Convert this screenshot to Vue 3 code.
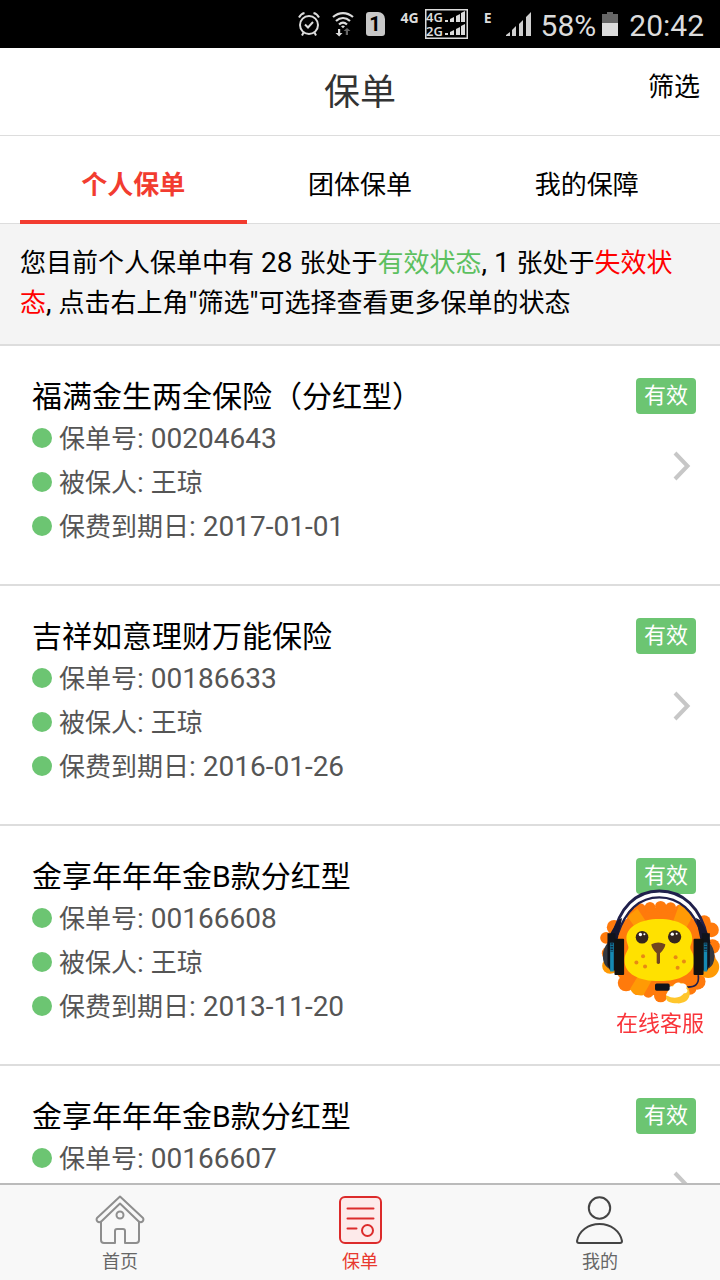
<template>
  <div class="app">
    <div class="status-bar">
      <svg class="status-icon" width="22" height="26" viewBox="0 0 22 26" fill="none" stroke="#dcdcdc" stroke-width="2" aria-hidden="true">
        <circle cx="11" cy="14" r="9" />
        <path d="M7 13.500l3 3 5-5.500M1 6.500c1-2 3-4 5.500-4.500M21 6.500c-1-2-3-4-5.500-4.500M5.500 21.500L4 24.500M16.500 21.500L18 24.500" />
      </svg>
      <svg class="status-icon" width="22" height="26" viewBox="0 0 22 26" fill="none" stroke="#dcdcdc" stroke-width="2.200" aria-hidden="true">
        <path d="M1 6c6-5.300 14-5.300 20 0M4 10c4.200-4 9.800-4 14 0M7 13.500c2.500-2.300 5.500-2.300 8 0" />
        <path d="M9 15.300q2-1.500 4 0l-2 2z" fill="#dcdcdc" stroke="none" />
        <path d="M6 18v4H3.500L7.200 25.500 10.500 22H8.200v-4z" fill="#dcdcdc" stroke="none" />
        <path d="M13.800 24v-4h-2.300L15 17l3.500 3H16v4z" fill="#666" stroke="none" />
      </svg>
      <span class="sim">1</span>
      <span class="net net-4g">4G</span>
      <svg class="dual" width="43" height="30" viewBox="0 0 43 30" aria-hidden="true">
        <rect x=".75" y=".75" width="41.500" height="28.500" fill="none" stroke="#dcdcdc" stroke-width="1.500" />
        <g fill="#dcdcdc">
          <text x="1" y="13">4G</text>
          <text x="1" y="27">2G</text>
          <path d="M20 11h3v2h-3zM25 10l4-2v5h-4zM31 7l4-2v8h-4zM36 4l4-2v11h-4z" />
          <path d="M20 24h3v2h-3zM25 23l4-2v5h-4zM31 20l4-2v8h-4zM36 17l4-2v11h-4z" />
        </g>
      </svg>
      <span class="net net-e">E</span>
      <svg class="signal" width="25" height="24" viewBox="0 0 25 24" fill="#d0d0d0" aria-hidden="true">
        <path d="M0 24v-1l4-3v4zM6 24v-6l4-4v10zM13 24V12l4-4v16zM20 24V5l5-5v24z" />
      </svg>
      <span class="percent">58%</span>
      <svg class="battery" width="16" height="24" viewBox="0 0 16 24" aria-hidden="true">
        <path d="M0 2h5V0h6v2h5v10H0z" fill="#666" />
        <path d="M0 11h16v13H0z" fill="#dcdcdc" />
      </svg>
      <span class="clock">20:42</span>
    </div>

    <header class="header">
      <h1 class="header-title">保单</h1>
      <button type="button" class="filter">筛选</button>
    </header>

    <nav class="tabs">
      <button
        v-for="(tab, i) in tabs"
        :key="tab"
        type="button"
        :class="['tab', { active: activeTab === i }]"
        @click="activeTab = i"
      >{{ tab }}</button>
    </nav>

    <p class="notice">您目前个人保单中有<span class="latin"> 28 </span>张处于<span class="valid">有效状态</span><span class="latin">, 1 </span>张处于<span class="invalid">失效状态</span><span class="latin">, </span>点击右上角<span class="latin">"</span>筛选<span class="latin">"</span>可选择查看更多保单的状态</p>

    <main class="policy-list">
      <article v-for="policy in policies" :key="policy.no" class="policy">
        <div class="policy-info">
          <h2 class="policy-name">{{ policy.name }}</h2>
          <ul class="policy-rows">
            <li>保单号<span class="latin">: {{ policy.no }}</span></li>
            <li>被保人<span class="latin">: </span>{{ policy.insured }}</li>
            <li>保费到期日<span class="latin">: {{ policy.due }}</span></li>
          </ul>
        </div>
        <div class="policy-side">
          <span class="badge">有效</span>
          <svg class="chevron" width="18" height="30" viewBox="0 0 18 30" fill="none" stroke="#c7c7c7" stroke-width="4" aria-hidden="true">
            <path d="M2 2l12.500 13L2 28" />
          </svg>
        </div>
      </article>
    </main>

    <a href="#service" class="service">
      <svg class="lion" width="120" height="117" viewBox="30 114 360 352" aria-hidden="true">
        <g fill="#ff7a0c">
          <ellipse cx="209" cy="305" rx="150" ry="132" />
          <circle v-for="(b, i) in maneBumps" :key="i" :cx="b[0]" :cy="b[1]" :r="b[2]" />
        </g>
        <g fill="#ff9a05">
          <path d="M112 200l30-24 60 90-30 20zM268 164l44 28-50 90-30-20zM120 418l30-50 40 15-30 54q-30 3-40-19z" />
          <circle cx="355" cy="352" r="33" />
          <circle cx="60" cy="348" r="24" />
        </g>
        <path d="M208 207c58 0 99 24 99 58 0 14-6 20-6 28 0 9 12 18 12 38 0 41-43 63-105 63s-105-22-105-63c0-20 12-29 12-38 0-8-6-14-6-28 0-34 41-58 99-58z" fill="#ffe100" />
        <g fill="#35251e">
          <circle cx="156" cy="262" r="19" />
          <circle cx="254" cy="261" r="20" />
        </g>
        <g fill="#fff">
          <circle cx="151" cy="254" r="5" />
          <circle cx="163" cy="253" r="3" />
          <circle cx="247" cy="253" r="5" />
          <circle cx="260" cy="252" r="3" />
        </g>
        <path d="M184 283q21-10 42 0 0 12-16 27v30q-5 6-10 0v-30q-16-15-16-27z" fill="#714520" />
        <g fill="#e88a13">
          <circle cx="159" cy="319" r="6" />
          <circle cx="139" cy="338" r="6" />
          <circle cx="165" cy="350" r="6" />
          <circle cx="257" cy="322" r="6" />
          <circle cx="282" cy="335" r="6" />
          <circle cx="263" cy="354" r="6" />
        </g>
        <path d="M76 256C96 178 142 132 208 132s112 46 134 124" fill="none" stroke="#fff" stroke-width="12" />
        <path d="M68 265C86 172 138 123 208 123s126 49 144 142" fill="none" stroke="#20204c" stroke-width="9" />
        <path d="M82 254C106 184 148 142 208 142s104 42 128 112" fill="none" stroke="#20204c" stroke-width="7" />
        <path d="M52 280l8-28 24-42 12-6-16 76zM362 280l-8-28-24-42-12-6 16 76z" fill="#17172f" />
        <path d="M56 276q-18 18-18 43t18 38zM356 276q18 18 18 43t-18 38z" fill="#343840" />
        <path d="M52 250h24v112H60l-8-16zM336 250h24v96l-8 16h-16z" fill="#10131b" />
        <path d="M60 279h11v86H60zM341 279h11v86h-11z" fill="#168ab2" />
        <path d="M65 280v26M347 280v26" stroke="#0e2940" stroke-width="8" stroke-dasharray="5 3" />
        <rect x="73" y="267" width="29" height="109" rx="3" fill="#12110f" />
        <rect x="311" y="267" width="30" height="109" rx="3" fill="#12110f" />
        <path d="M325 376c4 28-10 36-32 36h-54" fill="none" stroke="#20204c" stroke-width="5" />
        <path d="M228 444c0-20 18-44 40-45 20-1 34 20 31 38-4 20-22 25-38 24-18 0-33-6-33-17z" fill="#ffc62c" />
        <path d="M228 437c2-8 8-10 7-20 2-8 9-8 14-7 6-12 18-15 24-8 14-3 20 6 16 14 8 7 2 15-7 15-9 12-27 20-54 6z" fill="#fff" />
        <rect x="195" y="401" width="44" height="22" rx="5" fill="#11131b" />
      </svg>
      <span class="service-label">在线客服</span>
    </a>

    <nav class="bottom-nav">
      <a href="#home" class="nav-item">
        <svg width="50" height="50" viewBox="0 0 50 50" fill="none" stroke="#8e8e8e" stroke-width="2" stroke-linejoin="round" aria-hidden="true">
          <path d="M25 1.500L2 23q-1 2 .5 3.500 1.500 1.500 3.500.2L25 8.500l19 18.200q2 1.300 3.500-.2Q49 25 48 23z" />
          <path d="M6 27v18q0 3 3 3h11V36q0-2 2-2h6q2 0 2 2v12h11q3 0 3-3V27" />
          <circle cx="25" cy="20" r="3.500" />
        </svg>
        <span>首页</span>
      </a>
      <a href="#policy" class="nav-item current">
        <svg width="50" height="50" viewBox="0 0 50 50" fill="none" stroke="#dc2b2b" stroke-width="2" stroke-linecap="round" aria-hidden="true">
          <rect x="5" y="2" width="41" height="46" rx="5" fill="#fdeaea" />
          <path d="M12.500 13.500h26M12.500 23.500h26M12.500 33.500h9" />
          <circle cx="32.500" cy="35.500" r="5.500" />
        </svg>
        <span>保单</span>
      </a>
      <a href="#me" class="nav-item">
        <svg width="50" height="50" viewBox="0 0 50 50" fill="none" stroke="#444" stroke-width="2" stroke-linejoin="round" aria-hidden="true">
          <circle cx="24.500" cy="13" r="10.700" />
          <path d="M2 46c2-10 11-17 22.500-17S45 36 47 46q0 2-2 2H4q-2 0-2-2z" />
        </svg>
        <span>我的</span>
      </a>
    </nav>
  </div>
</template>

<script setup>
import { ref } from 'vue'

const tabs = ['个人保单', '团体保单', '我的保障']
const activeTab = ref(0)

const policies = [
  { name: '福满金生两全保险（分红型）', no: '00204643', insured: '王琼', due: '2017-01-01' },
  { name: '吉祥如意理财万能保险', no: '00186633', insured: '王琼', due: '2016-01-26' },
  { name: '金享年年年金B款分红型', no: '00166608', insured: '王琼', due: '2013-11-20' },
  { name: '金享年年年金B款分红型', no: '00166607', insured: '王琼', due: '2013-11-20' },
]

// Tufts around the mane: x, y, radius
const maneBumps = [
  [120, 188, 18], [150, 178, 18], [180, 172, 16], [212, 170, 17], [242, 173, 16],
  [272, 180, 17], [302, 190, 17], [343, 216, 20], [365, 240, 22], [368, 290, 22],
  [355, 325, 22], [322, 395, 25], [300, 415, 20], [245, 432, 22], [212, 438, 20],
  [175, 427, 17], [142, 420, 16], [108, 400, 25], [68, 345, 24], [55, 310, 20],
  [48, 264, 18], [72, 232, 22],
]
</script>

<style>
body {
  background: #fff;
}
</style>

<style scoped>
.app {
  display: flex;
  flex-direction: column;
  height: 100vh;
  font-family: Roboto, 'Noto Sans CJK SC', sans-serif;
  font-size: 26px;
  color: #000;
  background: #fff;
}

button {
  padding: 0;
  border: 0;
  background: none;
  font: inherit;
  color: inherit;
  cursor: pointer;
}

a {
  color: inherit;
  text-decoration: none;
}

.latin {
  font-size: 28px;
}

/* Status bar */
.status-bar {
  display: flex;
  align-items: center;
  justify-content: flex-end;
  flex-shrink: 0;
  height: 48px;
  padding-right: 16px;
  background: #000;
  color: #dcdcdc;
  font-size: 30px;
  line-height: 32px;
}

.status-icon {
  margin-right: 12px;
}

.sim {
  width: 19px;
  height: 24px;
  border-radius: 3px 7px 3px 3px;
  background: #c8c8c8;
  color: #000;
  font-size: 20px;
  font-weight: 700;
  line-height: 25px;
  text-align: center;
}

.net {
  font-family: 'Noto Sans', sans-serif;
  font-size: 14px;
  font-weight: 700;
  line-height: 16px;
  padding-bottom: 12px;
}

.net-4g {
  margin: 0 6px 0 16px;
}

.net-e {
  margin: 0 14px 0 16px;
}

.dual text {
  font-family: 'Noto Sans', sans-serif;
  font-size: 13px;
  font-weight: 600;
}

.percent {
  margin: 0 6px 0 10px;
  padding-top: 3px;
}

.clock {
  margin-left: 11px;
  padding-top: 3px;
}

/* Header */
.header {
  display: grid;
  grid-template-columns: 1fr auto 1fr;
  align-items: center;
  flex-shrink: 0;
  height: 87px;
  padding: 0 20px;
  border-bottom: 1px solid #ddd;
}

.header-title {
  grid-column: 2;
  margin: 0;
  padding-bottom: 6px;
  color: #333;
  font-size: 36px;
  font-weight: 400;
}

.filter {
  justify-self: end;
  padding-bottom: 14px;
}

/* Tabs */
.tabs {
  display: flex;
  flex-shrink: 0;
  height: 87px;
  padding: 0 20px;
  border-bottom: 1px solid #ddd;
}

.tab {
  flex: 1;
  margin-bottom: -1px;
  padding-top: 10px;
  padding-bottom: 2px;
  border-bottom: 4px solid transparent;
}

.tab.active {
  border-bottom-color: #f23c30;
  color: #f23c30;
  font-weight: 700;
}

.notice {
  flex-shrink: 0;
  margin: 0;
  padding: 19px 24px 21px 20px;
  border-bottom: 2px solid #ddd;
  background: #f4f4f4;
  line-height: 40px;
}

.valid {
  color: #5cc05f;
}

.invalid {
  color: #f00;
}

/* Policies */
.policy-list {
  flex: 1;
  min-height: 0;
  overflow-y: auto;
  scrollbar-width: none;
}

.policy {
  display: flex;
  justify-content: space-between;
  padding: 31px 24px 35px 32px;
  border-bottom: 2px solid #ddd;
}

.policy-name {
  margin: 0;
  font-size: 30px;
  font-weight: 400;
  line-height: 40px;
}

.policy-rows {
  margin: 0;
  padding: 0;
  list-style: none;
  color: #555;
}

.policy-rows li {
  height: 44px;
  line-height: 44px;
}

.policy-rows li::before {
  content: '';
  display: inline-block;
  width: 20px;
  height: 20px;
  margin-right: 7px;
  border-radius: 50%;
  background: #6cc572;
}

.policy-side {
  display: flex;
  flex-direction: column;
  align-items: flex-end;
  gap: 37px;
  padding-top: 1px;
}

.badge {
  padding: 0 8px;
  border-radius: 4px;
  background: #6cc572;
  color: #fff;
  font-size: 22px;
  line-height: 36px;
}

.chevron {
  margin-right: 5px;
}

/* Floating customer service entry */
.service {
  position: fixed;
  right: 0;
  bottom: 238px;
  display: flex;
  flex-direction: column;
  align-items: center;
  color: #f9343a;
  font-size: 22px;
  line-height: 37px;
}

/* Bottom navigation */
.bottom-nav {
  display: flex;
  flex-shrink: 0;
  height: 95px;
  border-top: 2px solid #bbb;
  background: #f8f8f8;
}

.nav-item {
  flex: 1;
  display: flex;
  flex-direction: column;
  align-items: center;
  padding-top: 10px;
  color: #666;
  font-size: 18px;
  line-height: 34px;
}

.nav-item.current {
  color: #e8392f;
}
</style>
